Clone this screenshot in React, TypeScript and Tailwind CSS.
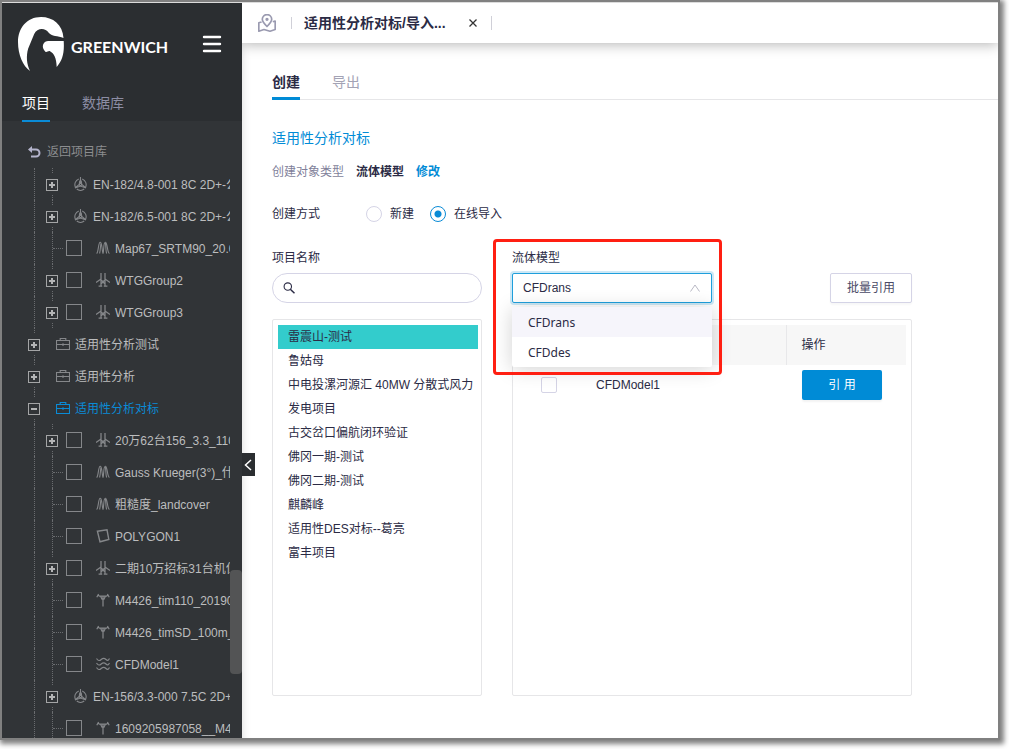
import { useState } from "react";
import type { ReactNode } from "react";

type IconName = "rotor" | "terrain" | "turbines" | "project" | "polygon" | "mast" | "waves";

type TreeRow = {
  label: string;
  icon: IconName;
  level: 1 | 2;
  toggle?: "plus" | "minus";
  check?: boolean;
  active?: boolean;
};

const treeRows: TreeRow[] = [
  { label: "EN-182/4.8-001 8C 2D+-公司", icon: "rotor", level: 2, toggle: "plus" },
  { label: "EN-182/6.5-001 8C 2D+-公司", icon: "rotor", level: 2, toggle: "plus" },
  { label: "Map67_SRTM90_20.0", icon: "terrain", level: 2, check: true },
  { label: "WTGGroup2", icon: "turbines", level: 2, toggle: "plus", check: true },
  { label: "WTGGroup3", icon: "turbines", level: 2, toggle: "plus", check: true },
  { label: "适用性分析测试", icon: "project", level: 1, toggle: "plus" },
  { label: "适用性分析", icon: "project", level: 1, toggle: "plus" },
  { label: "适用性分析对标", icon: "project", level: 1, toggle: "minus", active: true },
  { label: "20万62台156_3.3_110", icon: "turbines", level: 2, toggle: "plus", check: true },
  { label: "Gauss Krueger(3°)_什", icon: "terrain", level: 2, check: true },
  { label: "粗糙度_landcover", icon: "terrain", level: 2, check: true },
  { label: "POLYGON1", icon: "polygon", level: 2, check: true },
  { label: "二期10万招标31台机位", icon: "turbines", level: 2, toggle: "plus", check: true },
  { label: "M4426_tim110_20190", icon: "mast", level: 2, check: true },
  { label: "M4426_timSD_100m_", icon: "mast", level: 2, check: true },
  { label: "CFDModel1", icon: "waves", level: 2, check: true },
  { label: "EN-156/3.3-000 7.5C 2D+", icon: "rotor", level: 2, toggle: "plus" },
  { label: "1609205987058__M4", icon: "mast", level: 2, check: true },
];

const projects = [
  "雷震山-测试",
  "鲁姑母",
  "中电投漯河源汇 40MW 分散式风力",
  "发电项目",
  "古交岔口偏航闭环验证",
  "佛冈一期-测试",
  "佛冈二期-测试",
  "麒麟峰",
  "适用性DES对标--葛亮",
  "富丰项目",
];

const iconShapes: Record<IconName, ReactNode> = {
  rotor: (
    <>
      <path d="M4.800 2A6 6 0 0 0 1.500 10.300M8.200 2A6 6 0 0 1 11.500 10.300M2.800 12A6 6 0 0 0 10.200 12" />
      <path d="M6.500 0V6M5.800 3.500L5.200 7.500L1 11M7.200 3.500L7.800 7.500L12 11M1 11L6.500 9L12 11" />
      <circle cx="6.500" cy="7.500" r="1.100" />
    </>
  ),
  terrain: (
    <path
      d="M.6 12.500C2.600 11.500 2.200 1.200 4.200 1.200C6.200 1.200 5.600 8 7 12.500M3.600 12.500C4.600 9 4.300 3 5.300 1.700M7 12.500C8.200 9 7.200 1.200 9.400 1.200C11.600 1.200 11 11.500 13.400 12.500M9.400 2C10 5 9.600 9 10.600 12.500"
      strokeWidth="1.100"
    />
  ),
  turbines: (
    <path
      d="M5 0V13M9 0V13M5 6L0 9.500M9 6L14 9.500M4.600 6.500L7 8.800L9.400 6.500M2.600 13H6.200M7.800 13H11.400M7 8.800L5.500 10.500M7 8.800L8.500 10.500"
      strokeWidth="1.250"
    />
  ),
  project: (
    <path d="M.5 3.500H13.500V12.500H.5ZM4.200 3.500V1.500H9.800V3.500M.5 7.500H13.500M7 6.200V9" />
  ),
  polygon: <path d="M1.400 2.200L11 .8L12.800 10.400L4 12.800Z" strokeWidth="1.400" />,
  mast: (
    <path
      d="M7 3V13.500M2.200 2.200L3.500 3.200H10.500L11.800 2.200M.8 4.200L2.600 1M11.400 1L13.200 4.200M4.600 3.200L6 6.200H8L9.400 3.200"
      strokeWidth="1.250"
    />
  ),
  waves: (
    <path
      d="M.5 1.500C2 4 3.600 4 5.200 2.500S8.500 1 10 2.500S12.600 3.500 13.500 1.500M.5 6C2 8.500 3.600 8.500 5.200 7S8.500 5.500 10 7S12.600 8 13.500 6M.5 10.500C2 13 3.600 13 5.200 11.500S8.500 10 10 11.500S12.600 12.500 13.500 10.500"
      strokeWidth="1.200"
    />
  ),
};

function TreeIcon({ name }: { name: IconName }) {
  return (
    <svg viewBox="0 0 14 14" className="h-3.5 w-3.5 shrink-0" fill="none" stroke="currentColor" strokeWidth="1.1">
      {iconShapes[name]}
    </svg>
  );
}

function Toggle({ kind }: { kind: "plus" | "minus" }) {
  const [open, setOpen] = useState(kind === "minus");
  return (
    <button
      type="button"
      onClick={() => setOpen(!open)}
      className="mt-1.5 mb-1 flex h-3 w-3 shrink-0 items-center justify-center border border-[#a4a5a6]"
    >
      <svg viewBox="0 0 6 6" className="h-1.5 w-1.5" stroke="#b4b5b6" strokeWidth="2">
        <path d={open ? "M0 3H6" : "M0 3H6M3 0V6"} />
      </svg>
    </button>
  );
}

function Guide() {
  return <span className="w-0 flex-1 border-l border-dotted border-[#6a6c6f]" />;
}

function TreeItem({ row }: { row: TreeRow }) {
  return (
    <li className={row.active ? "flex h-8 items-center text-[#0a8bd6]" : "flex h-8 items-center text-[#85878a]"}>
      {row.level === 2 && (
        <span className="flex h-full w-[18px] shrink-0 flex-col items-center">
          <Guide />
        </span>
      )}
      <span className="flex h-full w-[18px] shrink-0 flex-col items-center">
        <Guide />
        {row.toggle && <Toggle kind={row.toggle} />}
        {row.toggle && <Guide />}
      </span>
      {row.level === 2 && row.check && !row.toggle && (
        <span className="-ml-2 w-2.5 shrink-0 border-t border-dotted border-[#6a6c6f]" />
      )}
      <label
        className={
          row.check
            ? row.toggle
              ? "flex items-center pl-[5px]"
              : "flex items-center pl-[3px]"
            : "flex items-center pl-[13px]"
        }
      >
        {row.check && (
          <input type="checkbox" className="mr-3.5 h-4 w-4 shrink-0 appearance-none border border-[#85878a] checked:bg-[#0a8bd6]" />
        )}
        <TreeIcon name={row.icon} />
        <span
          className={
            row.active
              ? "pt-0.5 pl-[5px] whitespace-nowrap"
              : "pt-0.5 pl-[5px] whitespace-nowrap text-[#bcbdbe]"
          }
        >
          {row.label}
        </span>
      </label>
    </li>
  );
}

function Logo() {
  return (
    <svg viewBox="0 0 46 54" className="h-[54px] w-[46px]" fill="#fff">
      <path d="M45.500 21C44.600 7.500 35 0 23 0C9 0 0 11 0 25C0 38 5 49 12 54C8.600 47 8 39 10.200 31.500L16.200 17C19 10.500 27.500 10.500 30.500 15.500C33.500 19.800 40 18.400 45.500 21Z" />
      <path d="M45.700 24H30C24.500 24.500 23.200 30.500 27 34.200C28.600 36.500 29.500 33.600 32 34.200C36 36.200 38.400 41 38.700 50C44.500 43.500 46.500 36 45.700 24Z" />
    </svg>
  );
}

function Sidebar() {
  return (
    <aside className="relative z-20 flex w-60 shrink-0 flex-col bg-[#313437]">
      <header className="flex h-[118px] shrink-0 flex-col justify-between bg-[#2b2e31] px-4 pt-3.5">
        <div className="flex items-center">
          <Logo />
          <span className="ml-[7px] pt-1.5 font-['Lato'] text-base leading-5 font-bold text-white">GREENWICH</span>
          <button type="button" className="mr-1 ml-auto text-white">
            <svg viewBox="0 0 20 18" className="h-[18px] w-5" fill="none" stroke="currentColor" strokeWidth="2.4" strokeLinecap="round">
              <path d="M2 2H18M2 9H18M2 16H18" />
            </svg>
          </button>
        </div>
        <nav className="flex gap-8 pl-1 text-sm leading-5">
          <a href="#project" className="-mb-px border-b-2 border-[#0a8bd6] pb-[7px] text-white">项目</a>
          <a href="#database" className="text-[#8c8da4]">数据库</a>
        </nav>
      </header>
      <div className="min-h-0 flex-1 basis-0 overflow-hidden pt-[15px] pr-3 pl-[23px] text-xs">
        <a href="#back" className="flex h-8 items-center gap-1.5 pl-0.5 text-[#8c8d8f]">
          <svg viewBox="0 0 14 14" className="h-3.5 w-3.5" fill="none" stroke="#b4b4cc" strokeWidth="2">
            <path d="M3 4.500H9A3.300 3.300 0 0 1 9 11.500H4" />
            <path d="M5 1V8L1 4.500Z" fill="#b4b4cc" stroke="none" />
          </svg>
          返回项目库
        </a>
        <ul className="overflow-hidden">
          {treeRows.map((row) => (
            <TreeItem key={row.label} row={row} />
          ))}
        </ul>
      </div>
      <span className="absolute right-0 bottom-16 h-[104px] w-3 rounded bg-[#535455]" />
      <button type="button" className="absolute top-[450px] left-full flex h-[23px] w-[13px] items-center bg-[#2b2e31] pl-0.5 text-white">
        <svg viewBox="0 0 8 12" className="h-3 w-2" fill="none" stroke="currentColor" strokeWidth="1.5">
          <path d="M7 1L1.500 6L7 11" />
        </svg>
      </button>
    </aside>
  );
}

function TopBar() {
  return (
    <header className="z-10 flex h-10 shrink-0 items-center bg-white pl-4 shadow-[0_2px_12px_rgba(0,0,0,0.28)]">
      <svg viewBox="0 0 18 18" className="h-[18px] w-[18px]" fill="none" stroke="#9a9ab0" strokeWidth="1.7" strokeLinejoin="round">
        <path d="M9 12.500C6 9.500 4.300 7.500 4.300 5.300A4.700 4.700 0 0 1 13.700 5.300C13.700 7.500 12 9.500 9 12.500Z" />
        <circle cx="9" cy="5.300" r=".8" />
        <path d="M3.600 8L.8 8.800V17.200L6 15.500L12 17.200L17.200 15.500V7L14.800 7.800" />
      </svg>
      <span className="ml-[15px] h-3 w-px bg-[#d0d0d8]" />
      <span className="ml-3 text-sm font-bold whitespace-nowrap text-[#2b2b45]">适用性分析对标/导入...</span>
      <button type="button" className="ml-[23px] text-[#333]">
        <svg viewBox="0 0 8 8" className="h-2 w-2" stroke="currentColor" strokeWidth="1.300">
          <path d="M.5 .5L7.500 7.500M7.500 .5L.5 7.500" />
        </svg>
      </button>
      <span className="ml-3.5 h-3.5 w-px bg-[#d0d0d8]" />
    </header>
  );
}

const radioClass =
  "h-4 w-4 appearance-none rounded-full border border-[#d5d4e6] bg-white checked:border-[#0a8bd6] checked:bg-[radial-gradient(circle,#0a8bd6_3px,#fff_4px)]";

function ModelField() {
  const [model, setModel] = useState("CFDrans");
  return (
    <div className="relative w-[200px]">
      <label htmlFor="model" className="block h-8 leading-[34px]">流体模型</label>
      <div className="relative">
        <select
          id="model"
          value={model}
          onChange={(e) => setModel(e.target.value)}
          className="block h-[30px] w-full appearance-none rounded-xs border border-[#1f9fdc] bg-white px-2.5 text-[#2b2b45] shadow-[0_0_0_2px_#cde8f6] outline-none"
        >
          <option>CFDrans</option>
          <option>CFDdes</option>
        </select>
        <svg viewBox="0 0 10 8" className="pointer-events-none absolute top-[11px] right-3 h-2 w-2.5" fill="none" stroke="#b8b8c4">
          <path d="M.5 7.500L5 1L9.500 7.500" />
        </svg>
      </div>
      <ul
        role="listbox"
        className="absolute top-full z-10 mt-1 w-full rounded-xs bg-white font-['Noto_Sans'] text-[#2b2b45] shadow-[0_2px_20px_rgba(0,0,0,0.18)]"
      >
        {["CFDrans", "CFDdes"].map((name) => (
          <li
            key={name}
            role="option"
            aria-selected={model === name}
            onClick={() => setModel(name)}
            className={model === name ? "h-[30px] bg-[#f6f5fb] px-4 leading-8" : "h-[30px] px-4 leading-8"}
          >
            {name}
          </li>
        ))}
      </ul>
      <span className="pointer-events-none absolute -top-0.5 -right-2.5 -bottom-[72px] -left-[19px] z-20 rounded border-3 border-[#ff1f12]" />
    </div>
  );
}

function ProjectColumn() {
  const [selected, setSelected] = useState(projects[0]);
  return (
    <section className="flex w-[210px] shrink-0 flex-col">
      <label htmlFor="search" className="block h-8 leading-[34px]">项目名称</label>
      <div className="flex h-[30px] items-center rounded-full border border-[#d5d4e6] px-2.5">
        <svg viewBox="0 0 12 12" className="h-3 w-3 shrink-0" fill="none" stroke="#2b2b45" strokeWidth="1.100">
          <circle cx="4.800" cy="4.600" r="3.700" />
          <path d="M7.300 7.300L11.500 11.300" strokeWidth="1.500" />
        </svg>
        <input id="search" type="text" className="ml-2 min-w-0 flex-1 outline-none" />
      </div>
      <ul className="mt-4 flex-1 rounded-xs border border-[#e6e6e8] py-[5px] pr-[3px] pl-[5px]">
        {projects.map((name) => (
          <li key={name}>
            <button
              type="button"
              onClick={() => setSelected(name)}
              className={
                name === selected
                  ? "block h-6 w-full bg-[#33cccc] pl-2.5 text-left whitespace-nowrap"
                  : "block h-6 w-full pl-2.5 text-left whitespace-nowrap"
              }
            >
              {name}
            </button>
          </li>
        ))}
      </ul>
    </section>
  );
}

function ModelColumn() {
  return (
    <section className="flex max-w-[400px] flex-1 flex-col">
      <div className="flex items-end justify-between">
        <ModelField />
        <button type="button" className="h-[30px] rounded-xs border border-[#d5d4e6] bg-white px-4 text-[#4a4a66] shadow-[0_2px_2px_rgba(0,0,0,0.03)]">
          批量引用
        </button>
      </div>
      <div className="mt-4 flex-1 rounded-xs border border-[#e6e6e8] p-[5px]">
        <table className="w-full table-fixed border-collapse text-left">
          <thead>
            <tr className="h-10 bg-[#f7f7f7]">
              <td className="w-[62px]" />
              <td />
              <th className="w-[120px] border-l border-[#e8e8ea] pl-[15px] font-normal">操作</th>
            </tr>
          </thead>
          <tbody>
            <tr className="h-10">
              <td>
                <input id="row1" type="checkbox" className="mx-auto block h-4 w-4 appearance-none rounded-xs border border-[#d5d4e6] checked:bg-[#008bd6]" />
              </td>
              <td className="pl-4">
                <label htmlFor="row1">CFDModel1</label>
              </td>
              <td className="pl-4">
                <button type="button" className="block h-[30px] w-20 rounded-xs bg-[#008bd6] text-white shadow-[0_2px_2px_rgba(0,0,0,0.05)]">
                  引 用
                </button>
              </td>
            </tr>
          </tbody>
        </table>
      </div>
    </section>
  );
}

export default function App() {
  return (
    <div className="flex h-screen min-h-[600px] bg-white pr-[9px] pb-[9px] font-['Liberation_Sans','Noto_Sans_CJK_SC',sans-serif] text-xs leading-6 text-[#2b2b45]">
      <div className="flex min-w-0 flex-1 border-2 border-[#808080] shadow-[2px_2px_5px_2px_#808080]">
        <div className="flex min-w-0 flex-1 border-t border-[#dcdcdc]">
          <Sidebar />
          <div className="flex min-w-0 flex-1 flex-col overflow-hidden bg-white">
            <TopBar />
            <main className="flex flex-1 flex-col pt-[27px] pb-[42px] pl-[30px] shadow-[inset_8px_0_10px_-8px_rgba(0,0,0,0.15)]">
              <nav className="flex gap-8 border-b border-[#e6e6e8] text-sm leading-6">
                <a href="#create" className="-mb-px border-b-3 border-[#008bd6] pb-[3px] font-bold">创建</a>
                <a href="#export" className="text-[#a3a3b5]">导出</a>
              </nav>
              <h1 className="mt-[26px] text-sm leading-6 text-[#008bd6]">适用性分析对标</h1>
              <p className="mt-2.5 flex gap-3">
                <span className="text-[#7f7f9a]">创建对象类型</span>
                <span className="font-bold">流体模型</span>
                <a href="#edit" className="font-bold text-[#008bd6]">修改</a>
              </p>
              <fieldset className="mt-[17px] flex items-center">
                <legend className="float-left w-[94px] leading-[26px]">创建方式</legend>
                <label className="flex items-center gap-2 leading-[26px]">
                  <input type="radio" name="mode" className={radioClass} />
                  新建
                </label>
                <label className="ml-4 flex items-center gap-2 leading-[26px]">
                  <input type="radio" name="mode" defaultChecked className={radioClass} />
                  在线导入
                </label>
              </fieldset>
              <div className="mt-3.5 flex flex-1 gap-[30px]">
                <ProjectColumn />
                <ModelColumn />
              </div>
            </main>
          </div>
        </div>
      </div>
    </div>
  );
}
